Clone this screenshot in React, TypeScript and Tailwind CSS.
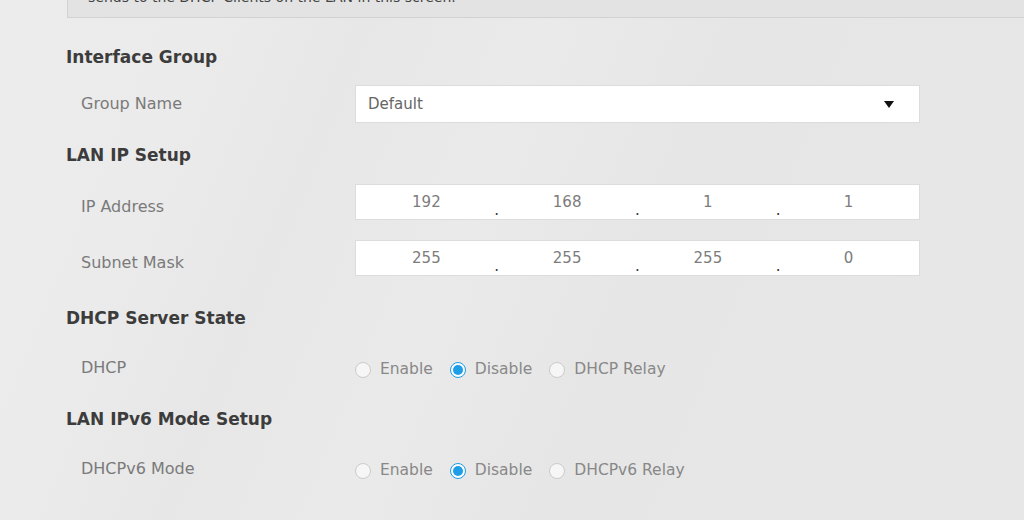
import React from 'react';

const font = { fontFamily: '"DejaVu Sans", "Liberation Sans", sans-serif' };

function Heading({ children, className = '' }: { children: React.ReactNode; className?: string }) {
  return (
    <div className={`h-[28px] pt-[4px] flex items-center text-[17px] font-bold text-[#3c3c3c] ${className}`}>
      {children}
    </div>
  );
}

function IpBox({ octets }: { octets: string[] }) {
  return (
    <div className="w-[565px] h-[36px] bg-white border border-[#dcdcdc] flex">
      {octets.map((o, i) => (
        <React.Fragment key={i}>
          {i > 0 && (
            <div className="w-0 flex justify-center self-end pb-[1px] text-[15px] text-[#333] leading-none">
              <span>.</span>
            </div>
          )}
          <div className="flex-1 flex justify-center items-center text-[15px] text-[#7c7c7c]">{o}</div>
        </React.Fragment>
      ))}
    </div>
  );
}

function Radio({ label, checked = false }: { label: string; checked?: boolean }) {
  return (
    <div className="flex items-center gap-[9px] mr-[17px]">
      {checked ? (
        <span className="w-[16px] h-[16px] rounded-full border border-[#1d9be3] bg-white flex items-center justify-center">
          <span className="w-[10px] h-[10px] rounded-full bg-[#1d9ee6]" />
        </span>
      ) : (
        <span className="w-[16px] h-[16px] rounded-full border border-[#cbcbcb] bg-[#f6f6f6]" />
      )}
      <span className="text-[15.5px] text-[#888]">{label}</span>
    </div>
  );
}

export default function App() {
  return (
    <div
      className="w-[1024px] h-[520px] overflow-hidden bg-[#e8e8e8] bg-[linear-gradient(112deg,#ececec_0%,#ebebeb_18%,#e7e7e7_30%,#eaeaea_45%,#e6e6e6_60%,#e7e7e7_100%)]"
      style={font}
    >
      <div className="pl-[66px]">
        {/* description box, cut off at the top */}
        <div className="ml-[1px] h-[18px] bg-[#e3e3e3] border-l border-b border-[#d2d2d2] overflow-hidden">
          <div className="pl-[20px] -mt-[13px] text-[14px] text-[#444] whitespace-nowrap">
            sends to the DHCP Clients on the LAN in this screen.
          </div>
        </div>

        <Heading className="mt-[24px]">Interface Group</Heading>
        <div className="mt-[15px] h-[38px] flex items-center">
          <div className="w-[289px] pl-[15px] text-[16px] text-[#7a7a7a]">Group Name</div>
          <div className="w-[565px] h-[38px] bg-white border border-[#dcdcdc] flex items-center justify-between pl-[12px] pr-[25px]">
            <span className="text-[15px] text-[#666]">Default</span>
            <svg width="10" height="7" viewBox="0 0 10 7">
              <path d="M0 0 L10 0 L5 7 Z" fill="#111" />
            </svg>
          </div>
        </div>

        <Heading className="mt-[17px]">LAN IP Setup</Heading>
        <div className="mt-[16px] flex items-center">
          <div className="w-[289px] pl-[15px] pt-[10px] text-[16px] text-[#7a7a7a]">IP Address</div>
          <IpBox octets={['192', '168', '1', '1']} />
        </div>
        <div className="mt-[20px] flex items-center">
          <div className="w-[289px] pl-[15px] pt-[10px] text-[16px] text-[#7a7a7a]">Subnet Mask</div>
          <IpBox octets={['255', '255', '255', '0']} />
        </div>

        <Heading className="mt-[27px]">DHCP Server State</Heading>
        <div className="mt-[23px] h-[28px] flex items-center">
          <div className="w-[289px] pl-[15px] text-[16px] text-[#7a7a7a]">DHCP</div>
          <div className="flex items-center pt-[3px]">
            <Radio label="Enable" />
            <Radio label="Disable" checked />
            <Radio label="DHCP Relay" />
          </div>
        </div>

        <Heading className="mt-[22px]">LAN IPv6 Mode Setup</Heading>
        <div className="mt-[23px] h-[28px] flex items-center">
          <div className="w-[289px] pl-[15px] text-[16px] text-[#7a7a7a]">DHCPv6 Mode</div>
          <div className="flex items-center pt-[3px]">
            <Radio label="Enable" />
            <Radio label="Disable" checked />
            <Radio label="DHCPv6 Relay" />
          </div>
        </div>
      </div>
    </div>
  );
}
